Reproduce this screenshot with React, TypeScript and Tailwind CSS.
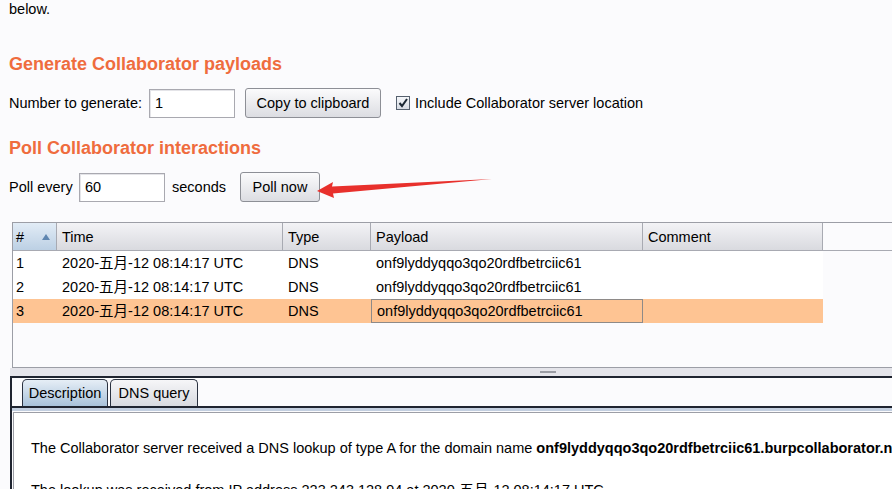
import React from "react";

const rows = [
  { id: "1", time: "2020-五月-12 08:14:17 UTC", type: "DNS", payload: "onf9lyddyqqo3qo20rdfbetrciic61" },
  { id: "2", time: "2020-五月-12 08:14:17 UTC", type: "DNS", payload: "onf9lyddyqqo3qo20rdfbetrciic61" },
  { id: "3", time: "2020-五月-12 08:14:17 UTC", type: "DNS", payload: "onf9lyddyqqo3qo20rdfbetrciic61" },
];

const TextBox = ({ value, width }: { value: string; width: string }) => (
  <div
    className={`${width} h-[29px] flex items-center px-[5px] bg-white border border-[#a9a9b0] shadow-[inset_1px_1px_0_#e4e4e8]`}
  >
    {value}
  </div>
);

const Button = ({ label, width }: { label: string; width: string }) => (
  <button
    className={`${width} h-[30px] rounded-[3px] border border-[#8d8f96] bg-gradient-to-b from-[#fbfbfc] to-[#dcdde2] text-black`}
  >
    {label}
  </button>
);

const Heading = ({ children }: { children: React.ReactNode }) => (
  <h2 className="text-[18px] leading-[20px] font-bold text-[#ef6c3e] pl-[9px]">{children}</h2>
);

export default function App() {
  return (
    <div className="relative w-[892px] h-[489px] overflow-hidden bg-[#fbfbfd] text-[14.5px] leading-[16px] text-black font-['Liberation_Sans','Noto_Sans_CJK_SC',sans-serif]">
      <p className="pl-[9px] pt-[1px]">below.</p>

      <div className="mt-[37px]">
        <Heading>Generate Collaborator payloads</Heading>
      </div>

      <div className="flex items-center mt-[14px] pl-[9px]">
        <span className="w-[140px]">Number to generate:</span>
        <TextBox value="1" width="w-[86px]" />
        <div className="ml-[10px]">
          <Button label="Copy to clipboard" width="w-[136px]" />
        </div>
        <div className="ml-[15px] w-[14px] h-[14px] border border-[#55606e] bg-gradient-to-b from-[#f4f6f9] to-[#d6dbe3] flex items-center justify-center">
          <svg width="12" height="12" viewBox="0 0 12 12">
            <path d="M2.5 6 L5 9 L10 2" fill="none" stroke="#1b2733" strokeWidth="2" />
          </svg>
        </div>
        <span className="ml-[5px]">Include Collaborator server location</span>
      </div>

      <div className="mt-[20px]">
        <Heading>Poll Collaborator interactions</Heading>
      </div>

      <div className="flex items-center mt-[14px] pl-[9px]">
        <span className="w-[70px]">Poll every</span>
        <TextBox value="60" width="w-[86px]" />
        <span className="ml-[7px] w-[68px]">seconds</span>
        <Button label="Poll now" width="w-[80px]" />
      </div>

      {/* table */}
      <div className="mt-[20px] ml-[12px] h-[146px] border-l border-t border-b border-[#9c9ea6] bg-[#fbfbfd]">
        <div className="flex h-[28px] border-b border-[#a8aab2]">
          <div className="w-[44px] flex items-center justify-between pl-[3px] pr-[6px] border-r border-[#a8aab2] bg-gradient-to-b from-[#e2ecf6] to-[#bcd0e4]">
            <span>#</span>
            <svg width="8" height="6" viewBox="0 0 8 6">
              <path d="M0 6 L4 0 L8 6 Z" fill="#5f86b0" />
            </svg>
          </div>
          {[
            ["Time", "w-[226px]"],
            ["Type", "w-[88px]"],
            ["Payload", "w-[272px]"],
            ["Comment", "w-[180px]"],
          ].map(([h, w]) => (
            <div
              key={h}
              className={`${w} flex items-center pl-[5px] border-r border-[#a8aab2] bg-gradient-to-b from-[#f3f3f6] to-[#d9dadf]`}
            >
              {h}
            </div>
          ))}
        </div>
        {rows.map((r, i) => {
          const sel = i === 2;
          return (
            <div key={r.id} className={`flex h-[24px] w-[810px] ${sel ? "bg-[#fec493]" : "bg-white"}`}>
              <div className="w-[44px] flex items-center pl-[3px]">{r.id}</div>
              <div className="w-[226px] flex items-center pl-[5px]">{r.time}</div>
              <div className="w-[88px] flex items-center pl-[5px]">{r.type}</div>
              <div
                className={`w-[272px] flex items-center pl-[5px] ${sel ? "border border-[#8e8a88]" : ""}`}
              >
                {r.payload}
              </div>
              <div className="w-[180px]" />
            </div>
          );
        })}
      </div>

      {/* splitter */}
      <div className="h-[8px] ml-[10px] bg-[#e4e4ea] flex items-center pl-[530px]">
        <div className="w-[16px] h-[2px] bg-[#9a9ca4]" />
      </div>

      {/* bottom panel */}
      <div className="ml-[10px] border-t-2 border-l-2 border-[#1f2430] bg-[#fbfbfd]">
        <div className="flex items-end gap-[2px] h-[30px] pl-[10px] border-b-2 border-[#1f2430]">
          <div className="h-[27px] w-[86px] flex items-center justify-center rounded-t-[5px] border border-b-0 border-[#2a3140] bg-gradient-to-b from-[#e6eef6] to-[#a9c2da]">
            Description
          </div>
          <div className="h-[27px] w-[88px] flex items-center justify-center rounded-t-[5px] border border-b-0 border-[#2a3140] bg-gradient-to-b from-[#f6f6f8] to-[#d8dae0]">
            DNS query
          </div>
        </div>
        <div className="h-[3px] bg-[#c3cfe0]" />
        <div className="ml-[1px] mt-[1px] border-l border-t border-[#9c9ea6] bg-white h-[80px] pl-[17px] pt-[27px]">
          <p className="whitespace-nowrap">
            The Collaborator server received a DNS lookup of type A for the domain name{" "}
            <b>onf9lyddyqqo3qo20rdfbetrciic61.burpcollaborator.net</b>
          </p>
          <p className="whitespace-nowrap mt-[26px]">
            The lookup was received from IP address 223.243.128.94 at 2020-五月-12 08:14:17 UTC.
          </p>
        </div>
      </div>

      {/* annotation arrow */}
      <svg className="absolute left-0 top-0 pointer-events-none" width="892" height="489">
        <polygon
          points="317,191 333,182 332,186.5 492,179 333,193.5 334,198"
          fill="#e8302c"
        />
      </svg>
    </div>
  );
}
